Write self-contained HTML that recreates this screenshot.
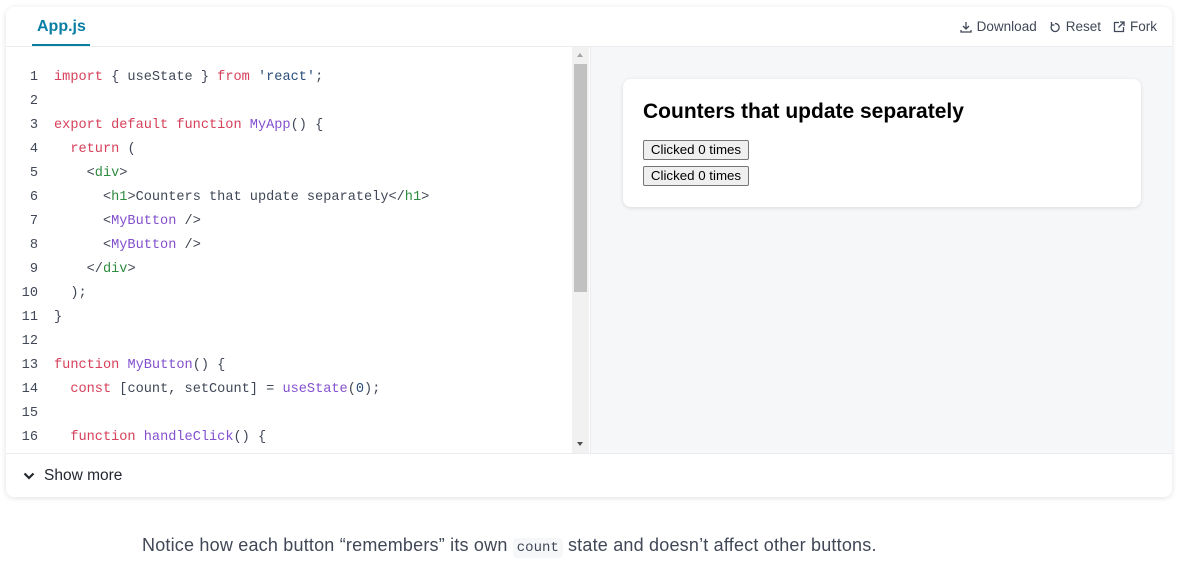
<!DOCTYPE html>
<html><head><meta charset="utf-8"><style>
body{margin:0;width:1178px;height:561px;background:#fff;font-family:"Liberation Sans",sans-serif;position:relative;overflow:hidden}
.card{position:absolute;left:6px;top:7px;width:1166px;height:490px;border-radius:8px;background:#fff;box-shadow:0 1px 6px rgba(0,0,0,.12);overflow:hidden}
.tabs{position:absolute;left:0;top:0;right:0;height:39px;border-bottom:1px solid #ebecf0}
.tab{position:absolute;left:31px;top:11px;font-size:16px;font-weight:bold;color:#087ea4}
.tabline{position:absolute;left:26px;top:37px;width:58px;height:2px;background:#087ea4}
.acts{position:absolute;right:15px;top:12px;font-size:13.5px;color:#404756;display:flex;gap:12px}
.acts span{display:flex;align-items:center;gap:5px}
.editor{position:absolute;left:0;top:40px;width:566px;height:406px;background:#fff}
.code{position:absolute;left:0;top:19px;font-family:"Liberation Mono",monospace;font-size:13.6px;line-height:24px;color:#404756;white-space:pre}
.ln{display:inline-block;width:32px;text-align:right;color:#404756;margin-right:16px}
.k{color:#d6405a}.s{color:#2a4d7a}.f{color:#8350cf}.t{color:#2e8b3f}
.sb{position:absolute;left:566px;top:40px;width:17px;height:406px;background:#f1f1f1}
.thumb{position:absolute;left:2px;top:17px;width:13px;height:228px;background:#c1c1c1}
.prev{position:absolute;left:584px;top:40px;right:0;height:406px;background:#f6f7f9;border-left:1px solid #ebecf0}
.pc{position:absolute;left:32px;top:32px;width:518px;height:128px;background:#fff;border-radius:8px;box-shadow:0 1px 4px rgba(0,0,0,.12)}
.pc h1{margin:0;position:absolute;left:20px;top:21px;font-size:21px;font-weight:bold;color:#000}
.btn{position:absolute;left:20px;height:20px;width:106px;border:1px solid #767676;background:#efefef;border-radius:2px;font-size:13.3px;line-height:18px;text-align:center;box-sizing:border-box;color:#000}
.more{position:absolute;left:0;top:446px;right:0;height:44px;border-top:1px solid #ebecf0;font-size:15.5px;color:#23272f}
.note{position:absolute;left:142px;top:535px;font-size:18px;letter-spacing:0.2px;color:#404756}
.note code{font-family:"Liberation Mono",monospace;font-size:14px;letter-spacing:0;background:#f6f7f9;padding:2px 4px;border-radius:4px}
</style></head><body>
<div class="card">
<div class="tabs"><div class="tab">App.js</div><div class="tabline"></div>
<div class="acts">
<span><svg width="12" height="12" viewBox="0 0 12 12" fill="none" stroke="#404756" stroke-width="1.3"><path d="M6 1v7M3 5l3 3 3-3M1 9v2h10V9"/></svg>Download</span>
<span><svg width="12" height="12" viewBox="0 0 12 12" fill="none" stroke="#404756" stroke-width="1.3"><path d="M3.5 3.5A4 4 0 1 0 6 2.5M2.5 1v3h3"/></svg>Reset</span>
<span><svg width="12" height="12" viewBox="0 0 12 12" fill="none" stroke="#404756" stroke-width="1.3"><path d="M6 1.5H1.5v9h9V6M7 1h4v4M11 1L5.5 6.5"/></svg>Fork</span>
</div></div>
<div class="editor"><div class="code"><span class="ln">1</span><span class="k">import</span> { useState } <span class="k">from</span> <span class="s">'react'</span>;
<span class="ln">2</span>
<span class="ln">3</span><span class="k">export default function</span> <span class="f">MyApp</span>() {
<span class="ln">4</span>  <span class="k">return</span> (
<span class="ln">5</span>    &lt;<span class="t">div</span>&gt;
<span class="ln">6</span>      &lt;<span class="t">h1</span>&gt;Counters that update separately&lt;/<span class="t">h1</span>&gt;
<span class="ln">7</span>      &lt;<span class="f">MyButton</span> /&gt;
<span class="ln">8</span>      &lt;<span class="f">MyButton</span> /&gt;
<span class="ln">9</span>    &lt;/<span class="t">div</span>&gt;
<span class="ln">10</span>  );
<span class="ln">11</span>}
<span class="ln">12</span>
<span class="ln">13</span><span class="k">function</span> <span class="f">MyButton</span>() {
<span class="ln">14</span>  <span class="k">const</span> [count, setCount] = <span class="f">useState</span>(<span class="s">0</span>);
<span class="ln">15</span>
<span class="ln">16</span>  <span class="k">function</span> <span class="f">handleClick</span>() {</div></div>
<div class="sb"><div class="thumb"></div>
<div style="position:absolute;left:5px;top:6px;border:3.5px solid transparent;border-bottom:4px solid #a3a3a3;border-top:0"></div>
<div style="position:absolute;left:5px;top:395px;border:3.5px solid transparent;border-top:4px solid #505050;border-bottom:0"></div></div>
<div class="prev"><div class="pc"><h1>Counters that update separately</h1>
<div class="btn" style="top:61px">Clicked 0 times</div>
<div class="btn" style="top:87px">Clicked 0 times</div></div></div>
<div class="more"><svg style="position:absolute;left:17px;top:17px" width="12" height="10" viewBox="0 0 12 10" fill="none" stroke="#23272f" stroke-width="2.2"><path d="M1.5 2.5L6 7l4.5-4.5"/></svg><span style="position:absolute;left:38px;top:13px">Show more</span></div>
</div>
<div class="note">Notice how each button “remembers” its own <code>count</code> state and doesn’t affect other buttons.</div>
</body></html>
